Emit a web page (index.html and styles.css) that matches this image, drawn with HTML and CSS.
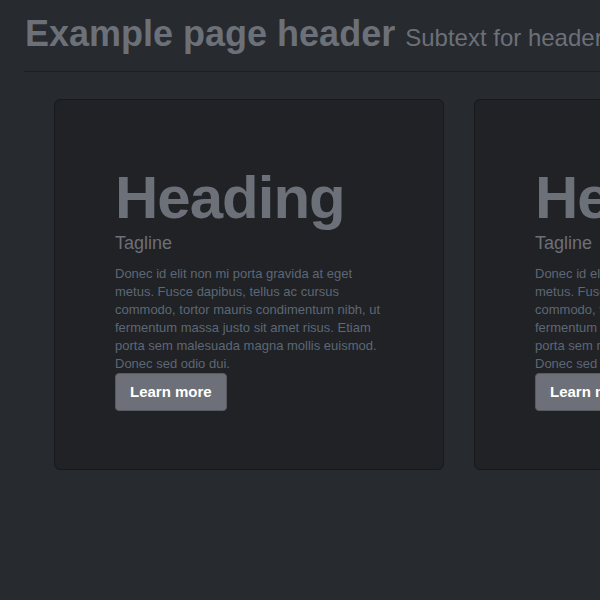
FILE: index.html
```html
<!DOCTYPE html>
<html>
<head>
<meta charset="utf-8">
<link rel="stylesheet" href="styles.css">
</head>
<body>
<div class="page">
  <div class="page-header">
    <h1>Example page header <small>Subtext for header</small></h1>
  </div>
  <div class="row">
    <div class="hero">
      <h2>Heading</h2>
      <p class="tagline">Tagline</p>
      <p class="body">Donec id elit non mi porta gravida at eget metus. Fusce dapibus, tellus ac cursus commodo, tortor mauris condimentum nibh, ut fermentum massa justo sit amet risus. Etiam porta sem malesuada magna mollis euismod. Donec sed odio dui.</p>
      <a class="btn">Learn more</a>
    </div>
    <div class="hero">
      <h2>Heading</h2>
      <p class="tagline">Tagline</p>
      <p class="body">Donec id elit non mi porta gravida at eget metus. Fusce dapibus, tellus ac cursus commodo, tortor mauris condimentum nibh, ut fermentum massa justo sit amet risus. Etiam porta sem malesuada magna mollis euismod. Donec sed odio dui.</p>
      <a class="btn">Learn more</a>
    </div>
  </div>
</div>
</body>
</html>
```
FILE: styles.css
```css
html, body {
  margin: 0;
  padding: 0;
  background: #272a2f;
  overflow: hidden;
}
body {
  font-family: "Liberation Sans", Arial, sans-serif;
  color: #6c7078;
}
.page {
  padding: 0 0 0 24px;
  width: 1200px;
}
.page-header {
  border-bottom: 1px solid #1d1f23;
  padding: 12px 0 11px 1px;
}
.page-header h1 {
  margin: 0;
  font-size: 36px;
  line-height: 44px;
  font-weight: bold;
  color: #6c7078;
}
.page-header small {
  font-size: 24px;
  font-weight: normal;
  color: #6c7078;
}
.row {
  display: flex;
  gap: 30px;
  padding: 27px 0 0 30px;
}
.hero {
  width: 268px;
  padding: 60px 60px 58px;
  background: #202226;
  border: 1px solid #17191c;
  border-radius: 6px;
  flex: none;
}
.hero h2 {
  margin: 8px 0 0;
  font-size: 60px;
  line-height: 60px;
  letter-spacing: -1px;
  font-weight: bold;
  color: #6c7078;
}
.tagline {
  margin: 0;
  font-size: 18px;
  line-height: 30px;
  color: #6c7078;
}
.body {
  margin: 7px 0 0;
  font-size: 13px;
  line-height: 18px;
  color: #5d6775;
}
.btn {
  display: inline-block;
  margin-top: 0;
  padding: 8px 14px;
  font-size: 15px;
  line-height: 20px;
  font-weight: bold;
  color: #ffffff;
  background: #6d7078;
  border: 1px solid #585b61;
  border-radius: 4px;
}
```
